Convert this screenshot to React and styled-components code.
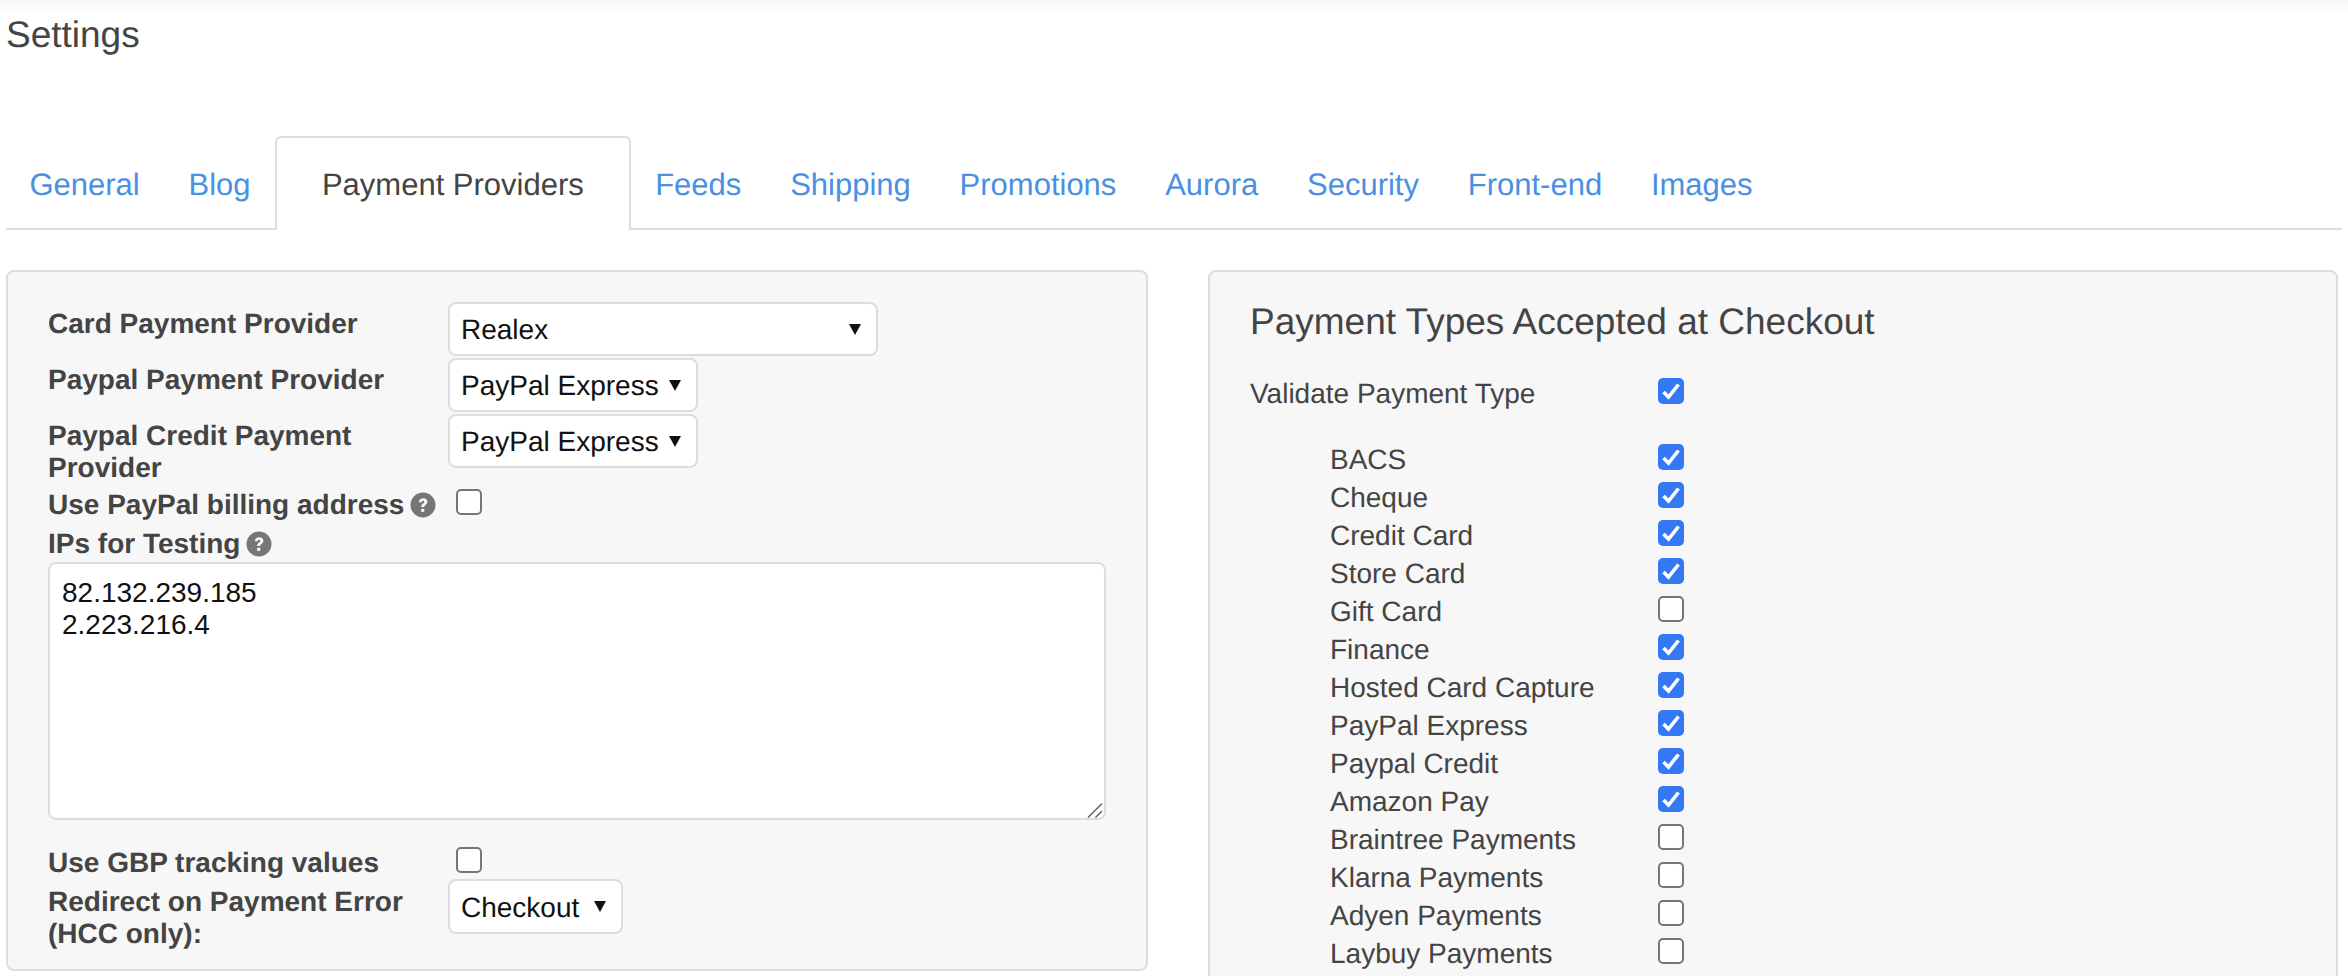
import React from "react";
import styled, { createGlobalStyle } from "styled-components";

const Global = createGlobalStyle`
  html, body { margin: 0; padding: 0; background: #fff; }
  body {
    font-family: "Liberation Sans", Arial, sans-serif;
    color: #444;
    overflow: hidden;
    height: 976px;
    text-rendering: geometricPrecision;
  }
`;
const Page = styled.div`
  height: 976px;
  overflow: hidden;
  padding: 0 6px;
  box-sizing: border-box;
  background: linear-gradient(#f7f7f7, #fff 14px);
`;
const Title = styled.h1`
  margin: 0;
  padding-top: 14px;
  font-size: 37px;
  line-height: 42px;
  font-weight: 400;
  height: 136px;
  box-sizing: border-box;
`;
const Tabs = styled.nav`
  display: flex;
  height: 94px;
  box-sizing: border-box;
  border-bottom: 2px solid #ddd;
`;
const Tab = styled.a`
  font-size: 31px;
  line-height: 44px;
  padding: 27px 24.4px 0;
  color: ${p => (p.$active ? "#444" : "#4a90e2")};
  &:first-child { padding-left: 23.4px; }
  ${p => p.$active && `
    background: #fff;
    border: 2px solid #ddd;
    border-bottom: 0;
    border-radius: 6px 6px 0 0;
    margin-bottom: -2px;
    padding: 25px 45px 0;
  `}
`;
const Columns = styled.div`
  display: flex;
  gap: 60px;
  margin-top: 40px;
  align-items: flex-start;
`;
const Panel = styled.section`
  box-sizing: border-box;
  background: #f7f7f7;
  border: 2px solid #ddd;
  border-radius: 8px;
  width: ${p => p.$w}px;
  height: ${p => p.$h}px;
  padding: ${p => p.$pad};
`;
const FormRow = styled.div`
  display: flex;
  align-items: flex-start;
`;
const FieldLabel = styled.label`
  width: 400px;
  flex: none;
  box-sizing: border-box;
  padding-top: ${p => (p.$pt === undefined ? 6 : p.$pt)}px;
  padding-right: 10px;
  font-weight: 700;
  font-size: 28px;
  line-height: 32px;
`;
const SelectBox = styled.div`
  box-sizing: border-box;
  width: ${p => p.$w}px;
  height: ${p => p.$h || 54}px;
  margin-bottom: 2px;
  background: #fff;
  border: 2px solid #ddd;
  border-radius: 8px;
  padding: 2px 15px 0 11px;
  display: flex;
  align-items: center;
  justify-content: space-between;
  font-size: 28px;
  color: #111;
`;
const Caret = styled.svg`
  width: 12px;
  height: 11px;
  flex: none;
  margin-top: -2px;
`;
const CheckBox = styled.span`
  display: block;
  flex: none;
  box-sizing: border-box;
  width: 26px;
  height: 26px;
  margin-left: ${p => p.$ml || 0}px;
  margin-top: ${p => p.$mt || 0}px;
  border-radius: 5px;
  background: ${p => (p.$on ? "#3478f6" : "#fff")};
  border: ${p => (p.$on ? "none" : "2px solid #767676")};
`;
const Help = styled.svg`
  width: 26px;
  height: 26px;
  vertical-align: -4px;
  margin-left: 6px;
`;
const NotesWrap = styled.div`
  position: relative;
  width: 1058px;
  height: 258px;
  margin-top: 2px;
  margin-bottom: 27px;
`;
const Notes = styled.textarea`
  display: block;
  box-sizing: border-box;
  width: 100%;
  height: 100%;
  padding: 13px 12px;
  background: #fff;
  border: 2px solid #ddd;
  border-radius: 8px;
  font-family: "Liberation Sans", Arial, sans-serif;
  font-size: 28px;
  line-height: 32px;
  color: #111;
  resize: none;
  outline: none;
`;
const Grip = styled.svg`
  position: absolute;
  right: 3px;
  bottom: 2px;
  width: 16px;
  height: 16px;
`;
const Heading = styled.h2`
  margin: -2px 0 34px;
  font-size: 37px;
  line-height: 44px;
  font-weight: 400;
`;
const TypeRow = styled.div`
  display: flex;
  align-items: flex-start;
  height: 38px;
  margin-bottom: ${p => p.$mb || 0}px;
`;
const TypeName = styled.span`
  width: ${p => (p.$indent ? 328 : 408)}px;
  margin-left: ${p => (p.$indent ? 80 : 0)}px;
  flex: none;
  font-size: 28px;
  line-height: 32px;
`;

const Tick = ({ on, ml, mt }) => (
  <CheckBox $on={on} $ml={ml} $mt={mt}>
    {on && (
      <svg viewBox="0 0 26 26" width="26" height="26" style={{ display: "block" }}>
        <path d="M5.5 14l5 5L20.5 6.5" fill="none" stroke="#fff" strokeWidth="3.6" />
      </svg>
    )}
  </CheckBox>
);
const Down = () => (
  <Caret viewBox="0 0 12 11"><path d="M0 0h12L6 11z" fill="#111" /></Caret>
);
const Question = () => (
  <Help viewBox="0 0 26 26">
    <circle cx="13" cy="13" r="12.5" fill="#767676" />
    <path d="M8.8 10.2c.2-2.6 2-3.9 4.4-3.9 2.500 0 4.200 1.400 4.200 3.500 0 1.500-.8 2.300-1.900 3.100-1 .7-1.300 1.100-1.300 2.100h-3c0-1.800.5-2.600 1.800-3.500.9-.6 1.300-1 1.300-1.600 0-.7-.5-1.100-1.200-1.100-.8 0-1.300.5-1.400 1.400z" fill="#f7f7f7" />
    <rect x="11.100" y="16.800" width="3.200" height="3" fill="#f7f7f7" />
  </Help>
);

const tabs = ["General", "Blog", "Payment Providers", "Feeds", "Shipping", "Promotions", "Aurora", "Security", "Front-end", "Images"];
const types = [
  ["BACS", 1], ["Cheque", 1], ["Credit Card", 1], ["Store Card", 1], ["Gift Card", 0], ["Finance", 1],
  ["Hosted Card Capture", 1], ["PayPal Express", 1], ["Paypal Credit", 1], ["Amazon Pay", 1],
  ["Braintree Payments", 0], ["Klarna Payments", 0], ["Adyen Payments", 0], ["Laybuy Payments", 0],
];

export default function App() {
  return (
    <Page>
      <Global />
      <Title>Settings</Title>
      <Tabs>
        {tabs.map(t => <Tab key={t} $active={t === "Payment Providers"}>{t}</Tab>)}
      </Tabs>
      <Columns>
        <Panel $w={1142} $h={701} $pad="30px 40px 0">
          <FormRow>
            <FieldLabel>Card Payment Provider</FieldLabel>
            <SelectBox $w={430}>Realex<Down /></SelectBox>
          </FormRow>
          <FormRow>
            <FieldLabel>Paypal Payment Provider</FieldLabel>
            <SelectBox $w={250}>PayPal Express<Down /></SelectBox>
          </FormRow>
          <FormRow>
            <FieldLabel>Paypal Credit Payment Provider</FieldLabel>
            <SelectBox $w={250}>PayPal Express<Down /></SelectBox>
          </FormRow>
          <FormRow>
            <FieldLabel $pt={5}>Use PayPal billing address<Question /></FieldLabel>
            <Tick ml={8} mt={5} />
          </FormRow>
          <FormRow>
            <FieldLabel $pt={7}>IPs for Testing<Question /></FieldLabel>
          </FormRow>
          <NotesWrap>
            <Notes defaultValue={"82.132.239.185\n2.223.216.4"} spellCheck={false} />
            <Grip viewBox="0 0 16 16">
              <path d="M1 15.500L15 1.500M8.500 15.500L15 9" stroke="#666" strokeWidth="1.500" fill="none" />
            </Grip>
          </NotesWrap>
          <FormRow>
            <FieldLabel $pt={0}>Use GBP tracking values</FieldLabel>
            <Tick ml={8} />
          </FormRow>
          <FormRow>
            <FieldLabel $pt={7}>Redirect on Payment Error (HCC only):</FieldLabel>
            <SelectBox $w={175} $h={55}>Checkout<Down /></SelectBox>
          </FormRow>
        </Panel>
        <Panel $w={1130} $h={760} $pad="30px 40px 0">
          <Heading>Payment Types Accepted at Checkout</Heading>
          <TypeRow $mb={28}>
            <TypeName>Validate Payment Type</TypeName>
            <Tick on />
          </TypeRow>
          {types.map(([n, on]) => (
            <TypeRow key={n}>
              <TypeName $indent>{n}</TypeName>
              <Tick on={!!on} />
            </TypeRow>
          ))}
        </Panel>
      </Columns>
    </Page>
  );
}
